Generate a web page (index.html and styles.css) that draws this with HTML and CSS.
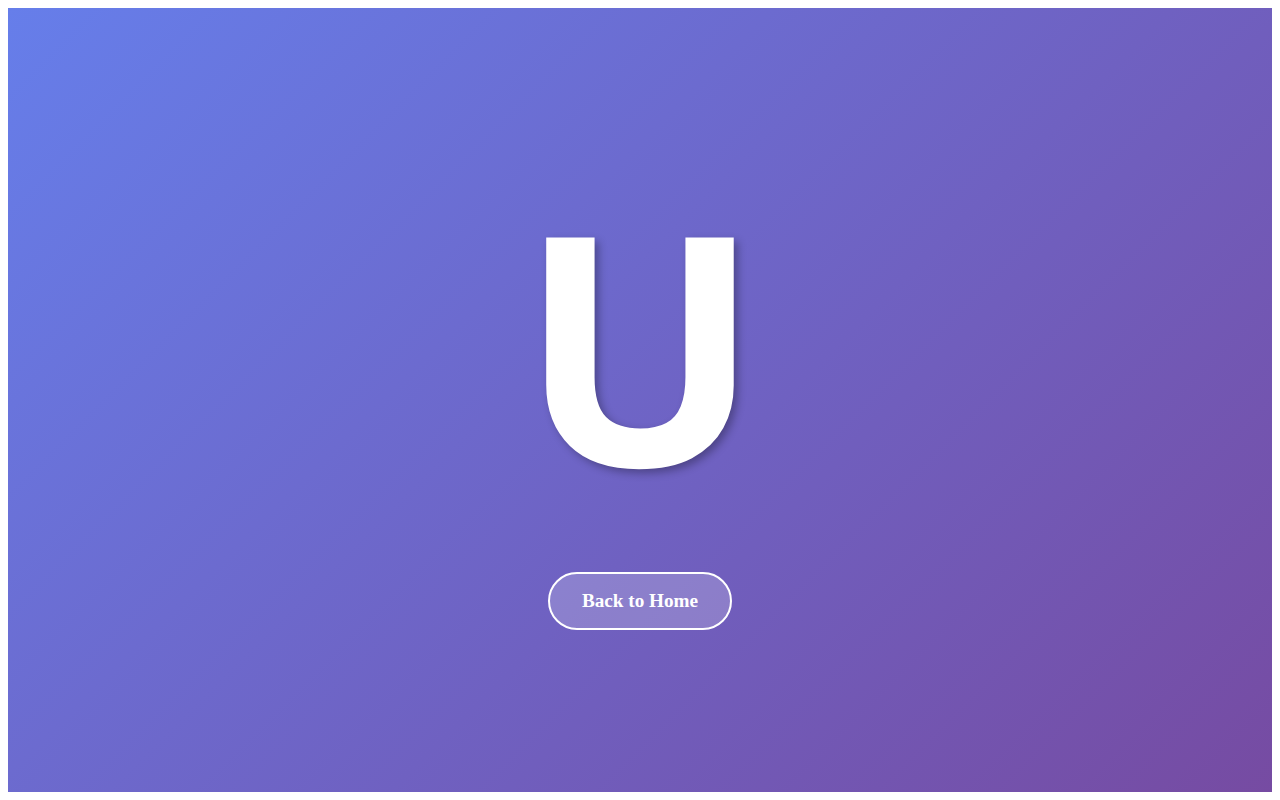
FILE: index.html
```html
<!DOCTYPE html>
<html lang="en">
<head>
<meta charset="utf-8">
<title>U</title>
<link rel="stylesheet" href="styles.css">
</head>
<body>
<main class="page">
  <h1 class="big-letter">U</h1>
  <a class="home-btn" href="#">Back to Home</a>
</main>
</body>
</html>
```

FILE: styles.css
```css
body {
  margin: 8px;
  background: #fff;
}
.page {
  min-height: 784px;
  background: linear-gradient(135deg, #667eea 0%, #764ba2 100%);
  display: flex;
  flex-direction: column;
  align-items: center;
  justify-content: center;
}
.big-letter {
  margin: 11px 0 70px;
  font-family: "Noto Sans", Roboto, "Liberation Sans", sans-serif;
  font-size: 320px;
  font-weight: bold;
  line-height: 1;
  color: #fff;
  text-shadow: 4px 4px 8px rgba(0, 0, 0, 0.3);
}
.home-btn {
  display: inline-block;
  padding: 16px 32px;
  border: 2px solid #fff;
  border-radius: 30px;
  background: rgba(255, 255, 255, 0.2);
  color: #fff;
  font-family: "Liberation Serif", "Times New Roman", serif;
  font-size: 19.2px;
  font-weight: bold;
  text-decoration: none;
}
```
